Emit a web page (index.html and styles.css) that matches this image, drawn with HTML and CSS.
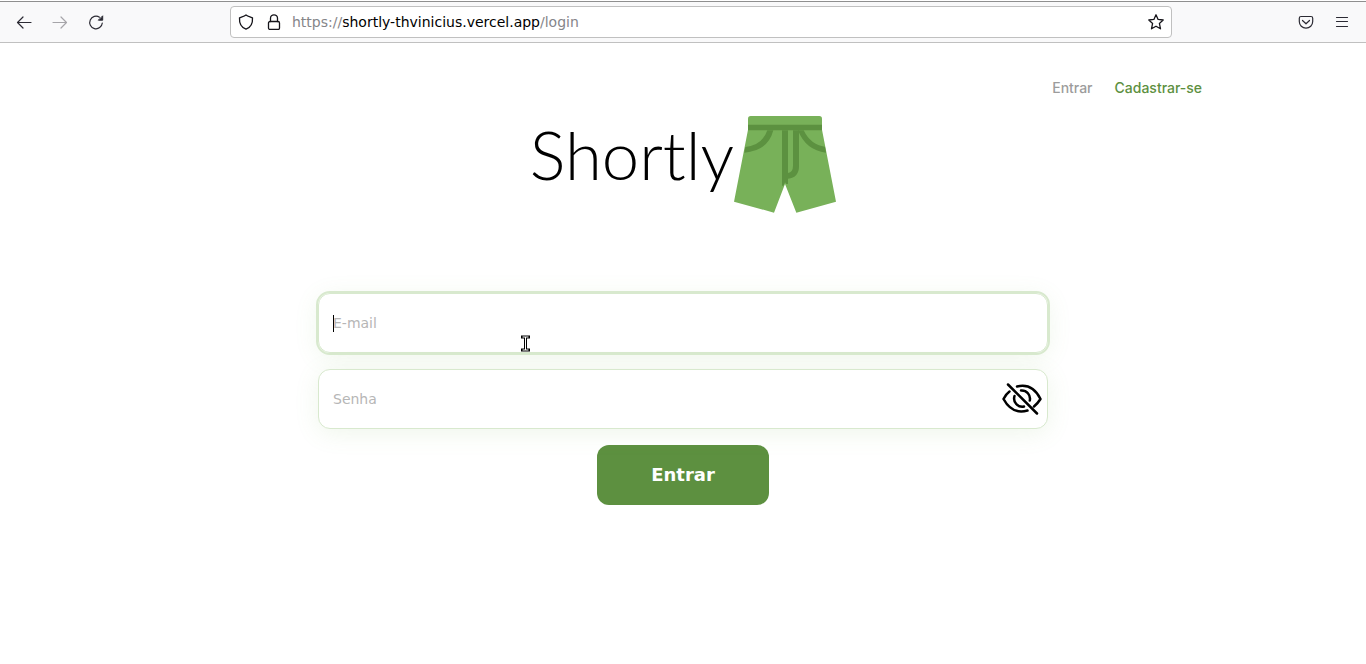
FILE: index.html
```html
<!DOCTYPE html>
<html lang="pt-BR">
<head>
<meta charset="utf-8">
<meta name="viewport" content="width=device-width, initial-scale=1">
<title>Shortly</title>
<link rel="stylesheet" href="styles.css">
</head>
<body>
<header class="browser">
  <div class="tool-group">
    <button class="tool" type="button" aria-label="Voltar"><svg width="16" height="16" viewBox="0 0 16 16"><path d="M15 8.500H1.500M7 3 1.500 8.500l5.500 5.500"/></svg></button>
    <button class="tool tool-disabled" type="button" aria-label="Avançar" disabled><svg width="16" height="16" viewBox="0 0 16 16"><path d="M1 8.500h13.500M9 3l5.500 5.500L9 14"/></svg></button>
    <button class="tool" type="button" aria-label="Recarregar"><svg width="16" height="16" viewBox="0 0 16 16"><path d="M11.500 3.200A6.300 6.300 0 1 0 14.300 9"/><path class="solid" d="M14.700 2.200v4H10.700z"/></svg></button>
  </div>
  <div class="address">
    <svg width="16" height="16" viewBox="0 0 16 16" aria-hidden="true"><path d="M8 1 C6.500 2.300 3.500 3 1.500 3.800 C1.200 8.500 2.500 13.200 8 15.200 C13.500 13.200 14.800 8.500 14.500 3.800 C12.500 3 9.500 2.300 8 1z"/></svg>
    <svg width="16" height="16" viewBox="0 0 16 16" aria-hidden="true"><rect x="2.500" y="7.500" width="11" height="8" rx="1.500"/><path d="M4.500 7.500V4.300a3.500 3.500 0 0 1 7 0v3.200"/></svg>
    <span class="url">https://<span class="host">shortly-thvinicius.vercel.app</span>/login</span>
    <button class="star" type="button" aria-label="Favoritar"><svg width="18" height="18" viewBox="0 0 18 18"><path d="M9 1.800 11.100 6.400 16.200 7 12.400 10.400 13.500 15.800 9 13.200 4.500 15.800 5.600 10.400 1.800 7 6.900 6.400z"/></svg></button>
  </div>
  <div class="tool-group tool-group-end">
    <button class="tool" type="button" aria-label="Pocket"><svg width="16" height="16" viewBox="0 0 16 16"><path d="M3 2.500h10A1.700 1.700 0 0 1 14.700 4.200V7.500a6.700 6.700 0 0 1-13.400 0V4.200A1.700 1.700 0 0 1 3 2.500zM4.500 6.500 8 9.800l3.500-3.300"/></svg></button>
    <button class="tool" type="button" aria-label="Menu"><svg width="16" height="16" viewBox="0 0 16 16"><path d="M2.500 3.500h11M2.500 7.500h11M2.500 12.500h11"/></svg></button>
  </div>
</header>
<main class="page">
  <nav class="nav">
    <a class="nav-link" href="#entrar">Entrar</a>
    <a class="nav-link nav-link-accent" href="#cadastro">Cadastrar-se</a>
  </nav>
  <h1 class="brand">
    <span>Shortly</span>
    <svg class="shorts" width="102" height="97" viewBox="642 31 306 291" aria-hidden="true">
      <path fill="#78b159" d="M684 72 642 288 762 321 795 235 829 321 948 288 906 72z"/>
      <path fill="#78b159" d="M684 74V39q0-8 8-8h206q8 0 8 8v35z"/>
      <path fill="#5c9140" d="M684 57h222v17H684z"/>
      <path fill="#5c9140" d="M742 74h18Q744 136 673 141l3-17Q727 119 742 74zM834 74h17Q872 118 915 123l3 18Q857 134 834 74z"/>
      <path fill="#5c9140" d="M786 74h18v128q15-3 15-22V74h18v108q0 34-33 37v16h-5l-4-5-4 10h-5z"/>
    </svg>
  </h1>
  <form class="form" id="entrar">
    <div class="field">
      <input class="input input-active" type="email" placeholder="E-mail" aria-label="E-mail">
      <span class="caret"></span>
      <svg class="pointer" width="9" height="17" viewBox="0 0 9 17" aria-hidden="true">
        <path class="pointer-edge" d="M1.500 2h6M4.500 2v13M1.500 15h6"/>
        <path class="pointer-core" d="M1.500 2h6M4.500 2v13M1.500 15h6"/>
      </svg>
    </div>
    <div class="field">
      <input class="input" type="password" placeholder="Senha" aria-label="Senha">
      <button class="reveal" type="button" aria-label="Mostrar senha">
        <svg width="40" height="34" viewBox="0 0 40 34"><path d="M6 2.500 35 31.500M15 4.500C25 2 33 6 38.500 17Q36 21 32 24.500M7.500 9.500Q4 12 1.500 17C7 27 15 31.500 25.500 28.500M19 8.500A8.300 8.300 0 0 1 27.800 18.500M12.500 14A8.300 8.300 0 0 0 22 24.600"/></svg>
      </button>
    </div>
    <button class="submit" type="submit">Entrar</button>
  </form>
</main>
</body>
</html>
```
FILE: styles.css
```css
* { box-sizing: border-box; }
body {
  margin: 0;
  background: #fff;
  font-family: "DejaVu Sans", sans-serif;
  font-size: 14px;
}
button { border: 0; padding: 0; background: none; display: flex; }
svg { display: block; flex: none; }

.browser {
  display: grid;
  grid-template-columns: 214px minmax(0, 1fr) 178px;
  align-items: center;
  height: 42px;
  margin-top: 1px;
  padding: 0 16px;
  background: #f9f9fa;
  border-top: 1px solid #8f8f8f;
  border-bottom: 1px solid #c0c0c0;
}
.browser svg {
  fill: none;
  stroke: #2b2a33;
  stroke-width: 1.200;
  stroke-linecap: round;
  stroke-linejoin: round;
}
.browser .solid { fill: #2b2a33; stroke-width: 1; }
.tool-group { display: flex; gap: 20px; }
.tool-group-end { justify-content: flex-end; }
.tool-disabled { opacity: .4; }
.address {
  display: flex;
  align-items: center;
  gap: 12px;
  height: 32px;
  padding: 0 6px 0 7px;
  background: #fff;
  border: 1px solid #c0c0c0;
  border-radius: 4px;
}
.address svg { stroke: #15141a; stroke-width: 1.300; }
.url { flex: 1; min-width: 0; overflow: hidden; white-space: nowrap; color: #858589; margin-left: -2px; }
.host { color: #000; }

.page { padding: 36px 12% 32px; }
.nav {
  display: flex;
  justify-content: flex-end;
  gap: 22px;
  font: 500 14px/18px Inter, sans-serif;
}
.nav-link { color: #9c9c9c; text-decoration: none; }
.nav-link-accent { color: #5d9040; }
.brand {
  display: flex;
  justify-content: center;
  align-items: center;
  margin: 19px 0 0;
  font: 300 67px/76px Lato, sans-serif;
  color: #000;
}
.brand span { margin-bottom: 21px; }
.form {
  display: flex;
  flex-direction: column;
  align-items: center;
  gap: 16px;
  margin-top: 80px;
}
.field { position: relative; width: 100%; max-width: 730px; }
.input {
  display: block;
  width: 100%;
  height: 60px;
  padding: 0 14px;
  font: inherit;
  color: #222;
  background: #fff;
  border: 1px solid #d8e9ce;
  border-radius: 12px;
  box-shadow: 0 4px 24px rgba(120, 177, 89, .12);
}
.input::placeholder { color: #b6b6b6; opacity: 1; }
.input-active { outline: 2px solid #d8e9ce; }
.caret {
  position: absolute;
  left: 15px;
  top: 22px;
  width: 1px;
  height: 17px;
  background: #000;
}
.pointer { position: absolute; left: 203px; top: 42px; fill: none; overflow: visible; }
.pointer-edge { stroke: #000; stroke-width: 3; stroke-linecap: square; }
.pointer-core { stroke: #fff; stroke-width: 1; stroke-linecap: butt; }
.reveal { position: absolute; right: 6px; top: 13px; }
.reveal svg { fill: none; stroke: #000; stroke-width: 2.500; stroke-linecap: round; stroke-linejoin: round; }
.submit {
  justify-content: center;
  align-items: center;
  width: 172px;
  height: 60px;
  color: #fff;
  font: bold 18px/24px "DejaVu Sans", sans-serif;
  background: #5d9040;
  border-radius: 12px;
}
```
